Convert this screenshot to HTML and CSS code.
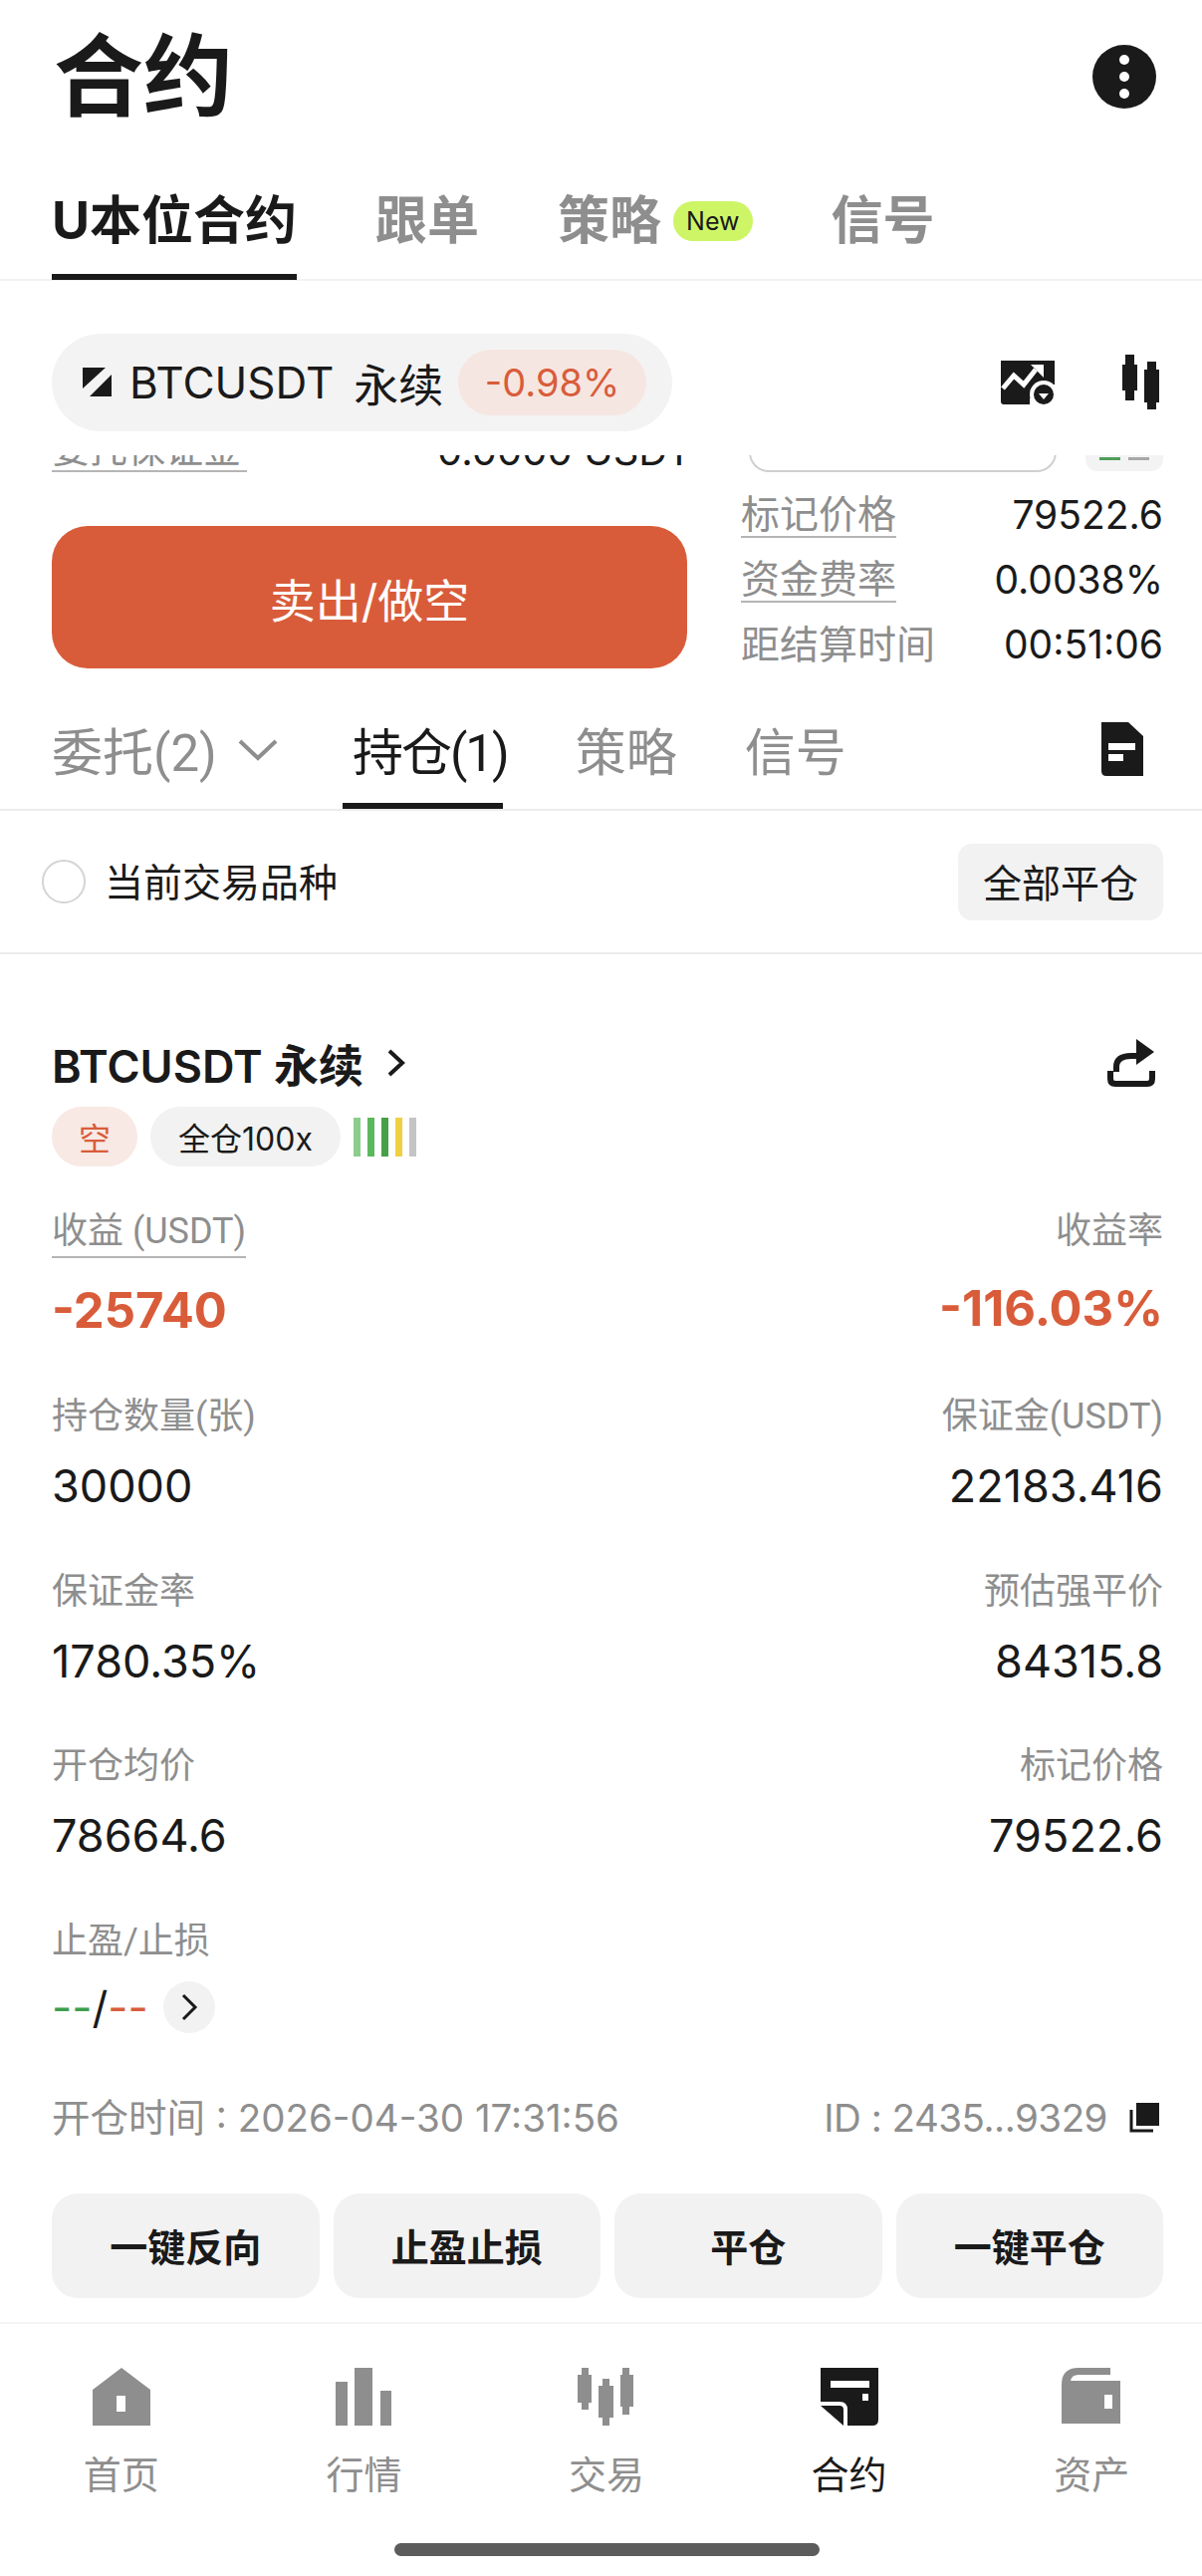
FILE: index.html
```html
<!DOCTYPE html>
<html lang="zh-CN">
<head>
    <meta charset="UTF-8">
    <title>合约</title>
    <link rel="stylesheet" href="styles.css">
</head>
<body>
<div class="page">
    <div class="top-bar">
        <h1 class="page-title">合约</h1>
        <div class="more-btn"><span></span><span></span><span></span></div>
    </div>

    <div class="main-tabs">
        <div class="main-tab active">U本位合约</div>
        <div class="main-tab">跟单</div>
        <div class="main-tab">策略<span class="new-badge">New</span></div>
        <div class="main-tab">信号</div>
    </div>

    <div class="symbol-row">
        <div class="symbol-pill">
            <svg class="symbol-logo" width="30" height="30" viewBox="0 0 30 30"><path d="M0 0H23L0 21Z" fill="#1a1a1a"/><path d="M29 7V29H7Z" fill="#1a1a1a"/></svg>
            <span class="symbol-name">BTCUSDT</span>
            <span class="symbol-type">永续</span>
            <span class="symbol-change">-0.98%</span>
        </div>
        <div class="symbol-tools">
            <svg width="56" height="44" viewBox="0 0 56 44"><path d="M1 0H55V44H4Q1 44 1 41Z" fill="#1a1a1a"/><path d="M3 28L14 15L24 24L36 9" fill="none" stroke="#fff" stroke-width="5"/><path d="M31 4H44V17Z" fill="#fff"/><rect x="46" y="24" width="10" height="20" fill="#fff"/><rect x="30" y="38" width="26" height="6" fill="#fff"/><circle cx="44" cy="34" r="14" fill="#fff"/><circle cx="44" cy="34" r="10" fill="#1a1a1a"/><path d="M39 33H49L44 39Z" fill="#fff"/></svg>
            <svg width="38" height="56" viewBox="0 0 38 56"><rect x="3" y="0" width="9" height="46" fill="#1a1a1a"/><rect x="0" y="10" width="15" height="26" fill="#1a1a1a"/><rect x="25" y="7" width="9" height="48" fill="#1a1a1a"/><rect x="22" y="15" width="15" height="33" fill="#1a1a1a"/></svg>
        </div>
    </div>

    <div class="clip-row">
        <div class="clip-inner">
            <span class="clip-label">委托保证金</span>
            <span class="clip-value">0.0000 USDT</span>
            <span class="clip-input"></span>
            <span class="clip-chip"><i class="dash-green"></i><i class="dash-gray"></i></span>
        </div>
    </div>

    <div class="trade-row">
        <div class="sell-col">
            <div class="sell-btn">卖出/做空</div>
        </div>
        <div class="info-col">
            <div class="info-row"><span class="info-label dashed">标记价格</span><span class="info-value">79522.6</span></div>
            <div class="info-row"><span class="info-label dashed">资金费率</span><span class="info-value">0.0038%</span></div>
            <div class="info-row"><span class="info-label">距结算时间</span><span class="info-value">00:51:06</span></div>
        </div>
    </div>

    <div class="order-tabs">
        <div class="order-tab">委托(2)
            <svg width="42" height="24" viewBox="0 0 42 24"><path d="M3 4L21 21L39 4" fill="none" stroke="#8e8e8e" stroke-width="4"/></svg>
        </div>
        <div class="order-tab active">持仓(1)</div>
        <div class="order-tab">策略</div>
        <div class="order-tab">信号</div>
        <svg class="doc-icon" width="42" height="54" viewBox="0 0 42 54"><path d="M0 0H27L42 14V54H5Q0 54 0 49Z" fill="#1a1a1a"/><rect x="7" y="21" width="27" height="7" fill="#fff"/><rect x="7" y="32" width="15" height="7" fill="#fff"/></svg>
    </div>

    <div class="filter-row">
        <div class="filter-check"><span class="radio"></span><span class="filter-text">当前交易品种</span></div>
        <div class="close-all">全部平仓</div>
    </div>

    <div class="position">
        <div class="pos-head">
            <div class="pos-title">BTCUSDT 永续
                <svg width="20" height="30" viewBox="0 0 20 30"><path d="M3 3L16 15L3 27" fill="none" stroke="#1a1a1a" stroke-width="4"/></svg>
            </div>
            <svg width="48" height="48" viewBox="0 0 48 48"><path d="M9 33V28Q9 17 24 17H30" fill="none" stroke="#1a1a1a" stroke-width="6"/><path d="M29 0L47 13L29 26Z" fill="#1a1a1a"/><path d="M3 32V40Q3 45 8 45H40Q45 45 45 40V32" fill="none" stroke="#1a1a1a" stroke-width="6"/></svg>
        </div>
        <div class="pos-tags">
            <span class="tag tag-short">空</span>
            <span class="tag">全仓100x</span>
            <span class="risk-bars">
                <i class="bar-1"></i><i class="bar-2"></i><i class="bar-3"></i><i class="bar-4"></i><i class="bar-5"></i>
            </span>
        </div>

        <div class="stat-row pnl-row">
            <div class="stat"><span class="stat-label dashed">收益 (USDT)</span><span class="stat-pnl">-25740</span></div>
            <div class="stat right"><span class="stat-label">收益率</span><span class="stat-pnl">-116.03%</span></div>
        </div>
        <div class="stat-row">
            <div class="stat"><span class="stat-label">持仓数量(张)</span><span class="stat-value">30000</span></div>
            <div class="stat right"><span class="stat-label">保证金(USDT)</span><span class="stat-value">22183.416</span></div>
        </div>
        <div class="stat-row">
            <div class="stat"><span class="stat-label">保证金率</span><span class="stat-value">1780.35%</span></div>
            <div class="stat right"><span class="stat-label">预估强平价</span><span class="stat-value">84315.8</span></div>
        </div>
        <div class="stat-row">
            <div class="stat"><span class="stat-label">开仓均价</span><span class="stat-value">78664.6</span></div>
            <div class="stat right"><span class="stat-label">标记价格</span><span class="stat-value">79522.6</span></div>
        </div>
        <div class="stat-row">
            <div class="stat">
                <span class="stat-label">止盈/止损</span>
                <span class="tpsl"><b class="green">--</b>/<b class="red">--</b>
                    <span class="tpsl-btn"><svg width="18" height="28" viewBox="0 0 18 28"><path d="M3 2L15 14L3 26" fill="none" stroke="#1a1a1a" stroke-width="3"/></svg></span>
                </span>
            </div>
        </div>

        <div class="meta-row">
            <span>开仓时间 : 2026-04-30 17:31:56</span>
            <span class="meta-id">ID : 2435...9329
                <svg width="30" height="30" viewBox="0 0 30 30"><rect x="7" y="0" width="23" height="23" fill="#1a1a1a"/><path d="M2 7V28H24" fill="none" stroke="#1a1a1a" stroke-width="3"/></svg>
            </span>
        </div>

        <div class="action-row">
            <div class="action-btn">一键反向</div>
            <div class="action-btn">止盈止损</div>
            <div class="action-btn">平仓</div>
            <div class="action-btn">一键平仓</div>
        </div>
    </div>

    <div class="bottom-nav">
        <div class="nav-item">
            <svg width="60" height="58" viewBox="0 0 60 58"><path d="M1 22L30 0L59 22V58H1Z" fill="#8e8e8e"/><rect x="25" y="28" width="9" height="16" fill="#fff"/></svg>
            <span>首页</span>
        </div>
        <div class="nav-item">
            <svg width="60" height="58" viewBox="0 0 60 58"><rect x="2" y="14" width="12" height="44" fill="#8e8e8e"/><rect x="21" y="0" width="18" height="58" fill="#8e8e8e"/><rect x="47" y="23" width="11" height="35" fill="#8e8e8e"/></svg>
            <span>行情</span>
        </div>
        <div class="nav-item">
            <svg width="60" height="58" viewBox="0 0 60 58"><rect x="5" y="0" width="7" height="42" fill="#8e8e8e"/><rect x="1" y="7" width="14" height="28" fill="#8e8e8e"/><rect x="26" y="11" width="7" height="47" fill="#8e8e8e"/><rect x="22" y="18" width="15" height="32" fill="#8e8e8e"/><rect x="46" y="0" width="7" height="47" fill="#8e8e8e"/><rect x="44" y="7" width="13" height="32" fill="#8e8e8e"/></svg>
            <span>交易</span>
        </div>
        <div class="nav-item active">
            <svg width="60" height="58" viewBox="0 0 60 58"><path d="M1 0H59V52Q59 58 53 58H1Z" fill="#1a1a1a"/><rect x="11" y="13" width="39" height="7" fill="#fff"/><rect x="43" y="26" width="6" height="7" fill="#fff"/><path d="M1 38L24 58H1Z" fill="#fff"/><path d="M1 36H20Q26 36 26 42V58" fill="none" stroke="#fff" stroke-width="4"/></svg>
            <span>合约</span>
        </div>
        <div class="nav-item">
            <svg width="60" height="58" viewBox="0 0 60 58"><path d="M0 56V17Q0 0 17 0H49V7H17Q10 7 9 13H59V56Z" fill="#8e8e8e"/><rect x="43" y="27" width="8" height="14" fill="#fff"/></svg>
            <span>资产</span>
        </div>
    </div>

    <div class="home-bar"></div>
</div>
</body>
</html>
```

FILE: styles.css
```css
* {
    box-sizing: border-box;
}

body {
    margin: 0;
    background: #fff;
    color: #1a1a1a;
    font-family: Inter, "Noto Sans CJK SC", sans-serif;
}

.page {
    width: 1207px;
    height: 2586px;
    overflow: hidden;
    display: flex;
    flex-direction: column;
}

.dashed {
    border-bottom: 2px solid #b5b5b5;
}

/* Top */
.top-bar {
    height: 154px;
    padding: 0 46px 0 54px;
    display: flex;
    justify-content: space-between;
    align-items: center;
}

.page-title {
    margin: 0;
    font-size: 90px;
    font-weight: 700;
    line-height: 1;
}

.more-btn {
    width: 64px;
    height: 64px;
    border-radius: 50%;
    background: #1a1a1a;
    display: flex;
    flex-direction: column;
    justify-content: center;
    align-items: center;
    gap: 7px;
}

.more-btn span {
    width: 10px;
    height: 10px;
    border-radius: 50%;
    background: #fff;
}

.main-tabs {
    height: 128px;
    padding-left: 52px;
    display: flex;
    gap: 79px;
    border-bottom: 2px solid #f2f2f2;
}

.main-tab {
    display: flex;
    align-items: center;
    height: 126px;
    padding-top: 10px;
    position: relative;
    font-size: 52px;
    font-weight: 700;
    color: #8e8e8e;
    line-height: 1;
}

.main-tab.active {
    color: #1a1a1a;
}

.main-tab.active::after {
    content: '';
    position: absolute;
    left: 0;
    right: 0;
    bottom: -1px;
    height: 6px;
    background: #1a1a1a;
}

.new-badge {
    margin-left: 12px;
    padding: 0 13px;
    height: 40px;
    border-radius: 20px;
    background: #cdf566;
    color: #1a1a1a;
    font-size: 25px;
    font-weight: 400;
    display: flex;
    align-items: center;
}

/* Symbol */
.symbol-row {
    padding: 53px 42px 0 52px;
    display: flex;
    justify-content: space-between;
    align-items: center;
}

.symbol-pill {
    width: 623px;
    height: 98px;
    border-radius: 49px;
    background: #f3f3f3;
    padding: 0 26px 0 31px;
    display: flex;
    align-items: center;
    font-size: 44px;
    font-weight: 400;
}

.symbol-name {
    margin-left: 17px;
}

.symbol-type {
    margin-left: 20px;
    font-size: 45px;
}

.symbol-change {
    margin-left: auto;
    width: 189px;
    height: 66px;
    border-radius: 33px;
    background: #f6e6e1;
    color: #d95c3a;
    font-size: 38px;
    display: flex;
    justify-content: center;
    align-items: center;
}

.symbol-tools {
    display: flex;
    align-items: center;
    gap: 67px;
}

/* Order form scrolled under the symbol row, only its last pixels show */
.clip-row {
    margin-top: 24px;
    height: 18px;
    overflow: hidden;
    padding: 0 39px 0 52px;
    display: flex;
    align-items: flex-end;
}

.clip-inner {
    width: 100%;
    display: flex;
    align-items: flex-end;
    font-size: 38px;
    line-height: 44px;
}

.clip-label {
    width: 196px;
    flex: none;
    color: #8e8e8e;
    border-bottom: 2px solid #b5b5b5;
    margin-bottom: 1px;
}

.clip-value {
    width: 504px;
    padding-left: 191px;
    flex: none;
    white-space: nowrap;
    font-size: 40px;
}

.clip-input {
    width: 309px;
    height: 50px;
    margin-bottom: 1px;
    border: 2px solid #cfcfcf;
    border-top: 0;
    border-radius: 0 0 20px 20px;
    flex: none;
}

.clip-chip {
    margin-left: 29px;
    margin-bottom: 2px;
    width: 78px;
    height: 38px;
    padding: 24px 12px 0 14px;
    border-radius: 0 0 12px 12px;
    background: #f3f3f3;
    flex: none;
    display: flex;
    align-items: flex-start;
    gap: 8px;
}

.clip-chip i {
    width: 21px;
    height: 3px;
}

.dash-green {
    background: #4f9e5a;
}

.dash-gray {
    background: #a8a8a8;
}

/* Trade */
.trade-row {
    padding: 0 39px 0 52px;
    flex: 0 0 220px;
    display: flex;
    gap: 54px;
}

.sell-col {
    width: 638px;
    flex: none;
    padding-top: 53px;
}

.sell-btn {
    height: 143px;
    border-radius: 36px;
    background: #d95c3a;
    color: #fff;
    font-size: 46px;
    display: flex;
    justify-content: center;
    align-items: center;
}

.info-col {
    flex: 1;
    padding-top: 19px;
    display: flex;
    flex-direction: column;
    gap: 20px;
}

.info-row {
    display: flex;
    justify-content: space-between;
    align-items: center;
    height: 45px;
    font-size: 39px;
}

.info-label {
    color: #8e8e8e;
    line-height: 45px;
}

/* Order tabs */
.order-tabs {
    height: 119px;
    padding: 0 59px 0 52px;
    display: flex;
    align-items: center;
    border-bottom: 2px solid #ececec;
    font-family: Roboto, "Noto Sans CJK SC", sans-serif;
    font-size: 51px;
    color: #8e8e8e;
}

.order-tab {
    height: 117px;
    padding-bottom: 4px;
    display: flex;
    align-items: center;
    margin-right: 68px;
}

.order-tab:first-child {
    margin-right: 74px;
    gap: 20px;
}

.order-tab.active {
    color: #1a1a1a;
    position: relative;
    letter-spacing: -2px;
}

.order-tab.active::after {
    content: '';
    position: absolute;
    left: -10px;
    right: 5px;
    bottom: 0;
    height: 6px;
    background: #1a1a1a;
}

.doc-icon {
    margin-left: auto;
    margin-bottom: 4px;
}

.filter-row {
    height: 144px;
    padding: 0 39px 0 42px;
    display: flex;
    justify-content: space-between;
    align-items: center;
    border-bottom: 2px solid #ececec;
}

.filter-check {
    display: flex;
    align-items: center;
    gap: 19px;
    font-size: 39px;
}

.filter-text {
    padding-bottom: 5px;
}

.radio {
    width: 44px;
    height: 44px;
    border-radius: 50%;
    border: 2px solid #d4d4d4;
}

.close-all {
    width: 206px;
    height: 77px;
    padding-bottom: 3px;
    border-radius: 14px;
    background: #f2f2f2;
    font-size: 39px;
    display: flex;
    justify-content: center;
    align-items: center;
}

/* Position card */
.position {
    padding: 85px 39px 0 52px;
    flex: 1;
    min-height: 0;
}

.pos-head {
    display: flex;
    justify-content: space-between;
    align-items: center;
    height: 48px;
    padding-right: 8px;
}

.pos-title {
    display: flex;
    align-items: center;
    gap: 23px;
    font-size: 45px;
    font-weight: 600;
    white-space: nowrap;
}

.pos-tags {
    margin-top: 20px;
    display: flex;
    align-items: center;
    gap: 13px;
}

.tag {
    height: 60px;
    padding: 0 28px;
    border-radius: 30px;
    background: #f2f2f2;
    font-size: 32px;
    display: flex;
    align-items: center;
}

.tag-short {
    background: #f8e9e5;
    color: #d95c3a;
    padding: 0 27px;
}

.risk-bars {
    display: flex;
    gap: 7px;
}

.risk-bars i {
    width: 7px;
    height: 39px;
}

.bar-1 { background: #8ccc8c; }
.bar-2 { background: #5cb85c; }
.bar-3 { background: #46a046; }
.bar-4 { background: #f0d040; }
.bar-5 { background: #c4c4c4; }

.stat-row {
    height: 175.5px;
    display: flex;
    justify-content: space-between;
}

.pnl-row {
    margin-top: 40px;
    height: 186px;
}

.stat {
    display: flex;
    flex-direction: column;
    align-items: flex-start;
}

.stat.right {
    align-items: flex-end;
}

.stat-label {
    color: #8e8e8e;
    font-family: Roboto, "Noto Sans CJK SC", sans-serif;
    font-size: 36px;
    line-height: 50px;
}

.stat-value {
    margin-top: 17px;
    font-size: 45px;
    line-height: 56px;
}

.stat-pnl {
    margin-top: 20px;
    font-size: 49px;
    font-weight: 700;
    line-height: 66px;
    color: #d95c3a;
}

.tpsl {
    margin-top: 15px;
    display: flex;
    align-items: center;
    font-size: 44px;
    line-height: 52px;
}

.tpsl b {
    font-weight: 400;
}

.green {
    color: #3f9e4d;
}

.red {
    color: #d95c3a;
}

.tpsl-btn {
    margin-left: 15px;
    width: 52px;
    height: 52px;
    border-radius: 50%;
    background: #f2f2f2;
    display: flex;
    justify-content: center;
    align-items: center;
}

.meta-row {
    margin-top: 4px;
    padding-right: 4px;
    display: flex;
    justify-content: space-between;
    align-items: center;
    font-size: 38.5px;
    color: #8e8e8e;
    line-height: 46px;
}

.meta-id {
    display: flex;
    align-items: center;
    gap: 22px;
    letter-spacing: -0.5px;
}

.action-row {
    margin-top: 53px;
    display: grid;
    grid-template-columns: repeat(4, 1fr);
    gap: 14px;
}

.action-btn {
    height: 105px;
    padding-bottom: 2px;
    border-radius: 26px;
    background: #f2f2f2;
    font-size: 38px;
    font-weight: 700;
    display: flex;
    justify-content: center;
    align-items: center;
}

/* Nav */
.bottom-nav {
    height: 205px;
    padding-top: 44px;
    display: flex;
    border-top: 2px solid #f4f4f4;
    flex: none;
}

.nav-item {
    flex: none;
    width: 243.6px;
    display: flex;
    flex-direction: column;
    align-items: center;
    gap: 26px;
    font-size: 38px;
    line-height: 46px;
    color: #8e8e8e;
}

.nav-item.active {
    color: #1a1a1a;
}

.home-bar {
    flex: none;
    width: 427px;
    height: 13px;
    margin: 17px 0 20px 396px;
    border-radius: 7px;
    background: #5c5c5c;
}
```
